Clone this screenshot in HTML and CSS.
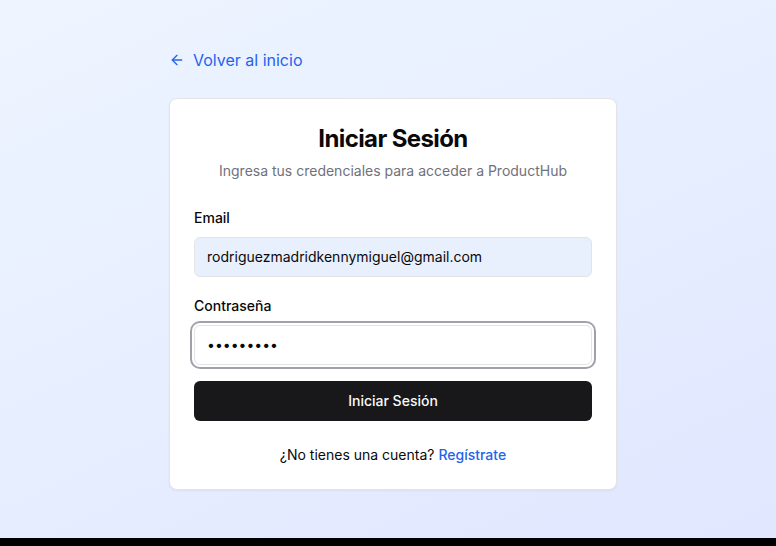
FILE: index.html
```html
<!DOCTYPE html>
<html lang="es">
<head>
<meta charset="utf-8">
<meta name="viewport" content="width=device-width, initial-scale=1">
<title>Iniciar Sesión - ProductHub</title>
<link rel="stylesheet" href="styles.css">
</head>
<body>
<main class="page">
  <div class="container">
    <a class="back" href="#">
      <svg class="back-icon" viewBox="0 0 24 24" fill="none" stroke="currentColor" stroke-width="2" stroke-linecap="round" stroke-linejoin="round" aria-hidden="true"><path d="m12 19-7-7 7-7"/><path d="M19 12H5"/></svg>
      Volver al inicio
    </a>
    <section class="card">
      <header class="card-header">
        <h1 class="title">Iniciar Sesión</h1>
        <p class="subtitle">Ingresa tus credenciales para acceder a ProductHub</p>
      </header>
      <form class="form">
        <div class="field">
          <label class="label" for="email">Email</label>
          <input class="input input-filled" id="email" type="email" value="rodriguezmadridkennymiguel@gmail.com">
        </div>
        <div class="field">
          <label class="label" for="password">Contraseña</label>
          <input class="input input-active" id="password" type="password" value="123456789">
        </div>
        <button class="submit" type="button">Iniciar Sesión</button>
      </form>
      <p class="signup">¿No tienes una cuenta? <a class="signup-link" href="#">Regístrate</a></p>
    </section>
  </div>
</main>
</body>
</html>
```
FILE: styles.css
```css
* {
  box-sizing: border-box;
  margin: 0;
}

body {
  min-height: 100vh;
  display: flex;
  flex-direction: column;
  border-bottom: 8px solid #000;
  font-family: Inter, "Liberation Sans", sans-serif;
  font-size: 16px;
  line-height: 24px;
  color: #09090b;
}

.page {
  flex: 1;
  display: flex;
  justify-content: center;
  padding: 48px 16px 48px 26px;
  background: linear-gradient(155deg, #eef5ff, #e0e7ff);
}

.container {
  width: 100%;
  max-width: 448px;
}

.back {
  display: inline-flex;
  align-items: center;
  gap: 8px;
  margin-bottom: 26px;
  color: #2563eb;
  text-decoration: none;
}

.back-icon {
  width: 16px;
  height: 16px;
}

.card {
  padding: 24px;
  border: 1px solid #e4e4e7;
  border-radius: 8px;
  background: #fff;
  box-shadow: 0 1px 2px rgb(0 0 0 / 5%);
}

.card-header {
  display: grid;
  gap: 6px;
  margin-bottom: 24px;
  text-align: center;
}

.title {
  font-size: 24px;
  line-height: 32px;
  font-weight: 700;
  letter-spacing: -0.6px;
}

.subtitle {
  font-size: 14px;
  line-height: 20px;
  color: #71717a;
}

.form {
  display: grid;
  gap: 16px;
}

.field {
  display: grid;
  gap: 6px;
}

.label {
  font-size: 14px;
  line-height: 26px;
  font-weight: 500;
}

.input {
  width: 100%;
  height: 40px;
  padding: 7px 12px 9px;
  border: 1px solid #e4e4e7;
  border-radius: 6px;
  outline: none;
  background: #fff;
  font: inherit;
  font-size: 14px;
  color: #09090b;
}

.input-filled {
  background: #e8f0fe;
}

.input-active {
  box-shadow: 0 0 0 2px #fff, 0 0 0 4px #a1a1aa;
}

.submit {
  height: 40px;
  border: 0;
  border-radius: 6px;
  background: #18181b;
  font: inherit;
  font-size: 14px;
  font-weight: 500;
  color: #fafafa;
}

.signup {
  margin-top: 24px;
  font-size: 14px;
  line-height: 20px;
  text-align: center;
}

.signup-link {
  color: #2563eb;
  font-weight: 500;
  text-decoration: none;
}
```
